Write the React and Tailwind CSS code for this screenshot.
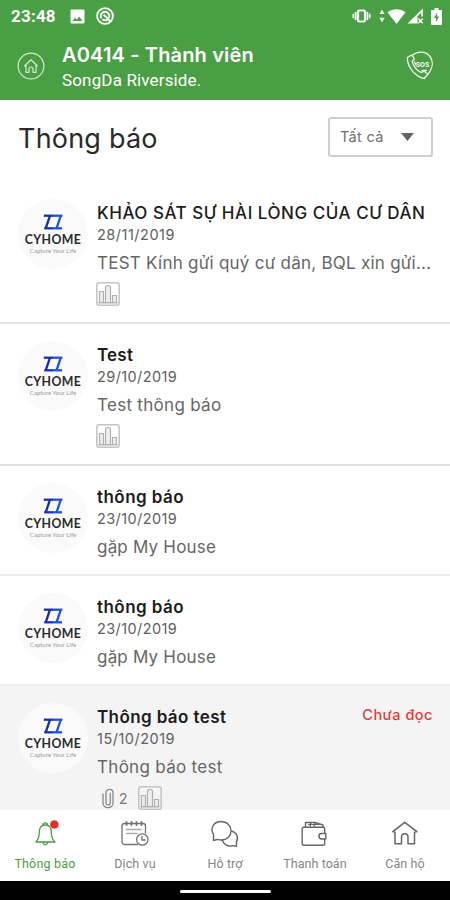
import React from "react";

const notices = [
  { id: 1, title: "KHẢO SÁT SỰ HÀI LÒNG CỦA CƯ DÂN", date: "28/11/2019", body: "TEST Kính gửi quý cư dân, BQL xin gửi...", chart: true, titleClass: "font-medium tracking-[0.53px]", dateClass: "tracking-[0.5px]", bodyClass: "tracking-[0.25px]" },
  { id: 2, title: "Test", date: "29/10/2019", body: "Test thông báo", chart: true, titleClass: "font-semibold tracking-[0.2px]", dateClass: "tracking-[0.4px]", bodyClass: "tracking-[0.3px]" },
  { id: 3, title: "thông báo", date: "23/10/2019", body: "gặp My House", titleClass: "font-semibold tracking-[0.45px]", dateClass: "tracking-[0.4px]", bodyClass: "tracking-[0.2px]" },
  { id: 4, title: "thông báo", date: "23/10/2019", body: "gặp My House", titleClass: "font-semibold tracking-[0.45px]", dateClass: "tracking-[0.4px]", bodyClass: "tracking-[0.2px]" },
  { id: 5, title: "Thông báo test", date: "15/10/2019", body: "Thông báo test", chart: true, files: 2, unread: true, titleClass: "font-semibold tracking-[0.4px]", dateClass: "tracking-[0.5px]", bodyClass: "tracking-[0.3px]" },
];

function StatusBar() {
  return (
    <div className="flex h-8 items-center pl-[11px] pr-[8px] text-white">
      <span className="w-[59px] font-['Roboto',sans-serif] text-[17px] font-bold leading-8 tracking-[0.2px]">23:48</span>
      <svg className="h-[15px] w-[15px]" viewBox="0 0 15 15">
        <rect x="0.5" y="0.5" width="14" height="14" rx="1.2" fill="#fff" />
        <path d="M2.5 12 5 8.8l1.8 2 2.4-3.2 3.3 4.4z" fill="#4a9e43" />
      </svg>
      <svg className="ml-[11px] h-[18px] w-[18px]" viewBox="0 0 18 18" fill="none" stroke="#fff">
        <circle cx="9" cy="9" r="7.9" strokeWidth="1.9" />
        <path d="M5.3 11.2A4.3 4.3 0 1 1 12.8 11M6.2 12.4q2.8 1.8 5.4.3" strokeWidth="1.9" />
        <path d="M7.6 7.6 14 14" strokeWidth="1.8" />
      </svg>
      <svg className="ml-auto h-[14px] w-[19px]" viewBox="0 0 19 14" fill="none" stroke="#fff">
        <path d="M1.2 4.8v4.4M17.8 4.8v4.4" strokeWidth="1.4" />
        <path d="M3.6 3v8M15.4 3v8" strokeWidth="1.8" />
        <rect x="6" y="1.5" width="7" height="11" rx="1" strokeWidth="2.2" />
      </svg>
      <svg className="ml-[8px] h-[15px] w-[27px]" viewBox="0 0 27 15" fill="#fff">
        <path d="M3 .8 5.6 5H.4zM3 13.2.4 8.8h5.2z" />
        <path d="M8.5 3.3C13.5-.8 21.5-.8 26.5 3.3L17.5 15z" />
      </svg>
      <svg className="ml-[1px] h-[16px] w-[17px]" viewBox="0 0 17 16" fill="#fff">
        <path d="M.5 15.5 15.8.5v8h-1.6V4.6L10.5 8.2v7.3z" />
        <path d="m11.3 10.5 4.4 4.7m0-4.7-4.4 4.7" stroke="#fff" strokeWidth="1.3" />
      </svg>
      <svg className="ml-[7px] h-[17px] w-[11px]" viewBox="0 0 11 17">
        <path d="M3.5 0h4v2H10q1 0 1 1v13q0 1-1 1H1q-1 0-1-1V3q0-1 1-1h2.5z" fill="#fff" />
        <path d="M6.2 4.5 3 10h2v4l3.2-5.5h-2z" fill="#4a9e43" />
      </svg>
    </div>
  );
}

function Header() {
  return (
    <header className="h-[100px] shrink-0 bg-[#4a9e43] text-white">
      <StatusBar />
      <div className="flex h-[68px] pl-[17px] pr-[16px]">
        <svg className="mt-[20px] h-[28px] w-[28px]" viewBox="0 0 28 28" fill="none" stroke="#d6ecd3" strokeWidth="1.2">
          <circle cx="14" cy="14" r="12.9" />
          <path d="m7.3 14.3 6.7-6.5 6.7 6.5M9 13v7.3h3V17q0-2 2-2t2 2v3.3h3V13M9 13v7.3" strokeLinejoin="round" />
        </svg>
        <div className="ml-[17px] flex-1 font-['Inter',sans-serif]">
          <h1 className="mt-[11px] text-[20px] font-semibold leading-6 tracking-[0.15px] whitespace-nowrap">A0414 - Thành viên</h1>
          <p className="mt-[3px] font-['Roboto',sans-serif] text-[17px] leading-5 tracking-[0.15px]">SongDa Riverside.</p>
        </div>
        <svg className="mt-[19px] h-[30px] w-[28px]" viewBox="0 0 28 30" fill="none" stroke="#eff8ed" strokeWidth="1.3" strokeLinejoin="round" strokeLinecap="round">
          <path d="M6 4.5C12-.5 20 .3 24 5.5c3.6 4.8 2.8 11.5-1.8 17.5" />
          <path d="m1.3 6.5 4-2.4c1 0 3 3.2 3 4.1l-2.2 2c.8 4.5 4.8 9.5 8.9 11.2l2.8-1.1c1 .1 3.7 2.6 3.6 3.5L18.2 27.5C9.5 25.7 1.2 16.5 1.3 6.5Z" />
          <path d="M16 19.5h4.5M8.5 11l1.5 3" />
          <text x="9.8" y="15.5" fill="#fff" stroke="none" className="font-['Roboto',sans-serif] text-[7px] font-bold">SOS</text>
        </svg>
      </div>
    </header>
  );
}

function Avatar() {
  return (
    <div className="mt-[17px] flex h-[70px] w-[70px] shrink-0 flex-col items-center rounded-full bg-[#fafafa]">
      <svg className="mt-[15px] h-[16px] w-[20px]" viewBox="0 0 20 16" fill="none" strokeWidth="2.3">
        <path d="M7 1.6 2.8 14.2" stroke="#1b2a9c" />
        <path d="M17.8 1.6 13.6 14.2" stroke="#1d55e0" />
        <path d="M.8 1.7H10" stroke="#1b2fa8" />
        <path d="M9.5 1.7H19.4" stroke="#2350d8" />
        <path d="M1.2 14.3H10" stroke="#1b2fc0" />
        <path d="M9.5 14.3H19" stroke="#1d55e0" />
      </svg>
      <span className="mt-[2px] font-['Lato',sans-serif] text-[12.3px] font-bold leading-[15px] tracking-[0.4px] text-[#2b2b2b]">CYHOME</span>
      <span className="font-['Lato',sans-serif] text-[6px] leading-[8px] tracking-[0.05px] whitespace-nowrap text-[#999]">Capture Your Life</span>
    </div>
  );
}

function ChartIcon() {
  return (
    <svg className="h-6 w-6" viewBox="0 0 24 24" fill="none" stroke="#b0b0b0">
      <rect x="0.8" y="0.8" width="22.4" height="22.4" rx="2.5" stroke="#c4c4c4" strokeWidth="1.5" />
      <path d="M3.5 20.5V9.5H7.5V20.5ZM9.5 20.5V5.5Q9.5 3.5 12 3.5T14.5 5.5V20.5ZM16.5 20.5V13.5H20.5V20.5ZM2.5 20.8H21.5" fill="#eee" strokeWidth="1.2" />
    </svg>
  );
}

function Notice({ item }) {
  return (
    <li className={item.unread ? "flex h-[125px] shrink-0 bg-[#f4f4f4] pl-[18px] overflow-hidden" : item.chart ? "flex h-[142px] shrink-0 border-b-2 border-[#e4e4e4] pl-[18px]" : "flex h-[110px] shrink-0 border-b-2 border-[#ececec] pl-[18px]"}>
      <Avatar />
      <div className="ml-[9px] min-w-0 flex-1 pr-[17px] font-['Inter',sans-serif]">
        <div className="mt-[20px] flex h-[22px] justify-between">
          <h3 className={`text-[17px] leading-[22px] whitespace-nowrap text-[#1c1c1c] ${item.titleClass}`}>{item.title}</h3>
          {item.unread && <span className="text-[14.5px] font-medium leading-[18px] tracking-[0.5px] whitespace-nowrap text-[#e23b3b]">Chưa đọc</span>}
        </div>
        <p className={`mt-[2px] text-[14.5px] leading-[18px] text-[#606060] ${item.dateClass}`}>{item.date}</p>
        <p className={`mt-[8px] text-[17px] leading-[22px] whitespace-nowrap text-[#666] ${item.bodyClass}`}>{item.body}</p>
        <div className="mt-[8px] ml-[-1px] flex">
          {item.files && (
            <div className="flex w-[42px] items-center pl-[6px]">
              <svg className="h-[21px] w-[12px]" viewBox="0 0 12 21" fill="none" stroke="#888" strokeWidth="1.3" strokeLinecap="round">
                <path d="M8.3 5.5v9.2c0 3-4.3 3-4.3 0V5C4 .1 11 .1 11 5v10c0 6.2-10 6.2-10 0V6" />
              </svg>
              <span className="ml-[5px] text-[14px] text-[#777]">{item.files}</span>
            </div>
          )}
          {item.chart && <ChartIcon />}
        </div>
      </div>
    </li>
  );
}

function BottomNav() {
  const label = "mt-[8px] font-['Roboto',sans-serif] text-[12.5px] leading-4 whitespace-nowrap";
  const icon = "mt-[10px] h-[28px] w-[30px]";
  return (
    <nav className="grid h-[71px] shrink-0 grid-cols-5 bg-white text-[#858585]">
      <a className="flex flex-col items-center text-[#4a9e43]">
        <svg className={icon} viewBox="0 0 30 28" fill="none" stroke="currentColor" strokeWidth="1.3" strokeLinejoin="round">
          <path d="M13.2 5.2V4q2.2-2.2 4.2 0v1.2M15.3 5c-4.6 0-6 3.2-6 7 0 5-1 7.6-3.4 10h19c-2.5-2.4-3.6-5-3.6-10 0-4-1.4-7-6-7ZM12.8 22.5q2.5 4.5 5 0" />
          <circle cx="24.3" cy="4.5" r="4.5" fill="#e52b2b" stroke="#fff" strokeWidth="0.6" />
        </svg>
        <span className={`${label} tracking-[0.2px]`}>Thông báo</span>
      </a>
      <a className="flex flex-col items-center">
        <svg className={icon} viewBox="0 0 30 28" fill="none" stroke="#737373" strokeWidth="1.3" strokeLinecap="round">
          <path d="M17.5 24.5H5Q2 24.5 2 21.5V6Q2 3.5 4.5 3.5H23Q25.5 3.5 25.5 6V13" />
          <path d="M6.5 1.8V5M11.5 1.8V5M16.5 1.8V5M21.5 1.8V5" strokeWidth="1.8" />
          <path d="M6.5 9.5H21M6.5 13.5H17" stroke="#aaa" />
          <circle cx="22.3" cy="19.5" r="5.7" />
          <path d="M22 16.5V20h3" />
        </svg>
        <span className={`${label} tracking-[0.1px]`}>Dịch vụ</span>
      </a>
      <a className="flex flex-col items-center">
        <svg className={icon} viewBox="0 0 30 28" fill="none" stroke="#666" strokeWidth="1.4" strokeLinejoin="round">
          <path d="M3.5 20.5V14.2C-.5 7.5 4.5 1.5 11 1.5c6 0 10 4.2 10 9.5s-4 9-9.5 9q-2.5 0-4-.7Z" />
          <path d="M21.3 11c5.3 1.2 7.7 6.6 5.2 10.5v4.7l-3.8-.6c-4.4 1.5-8.7-.6-10.5-5.6" />
        </svg>
        <span className={`${label} tracking-[0.1px]`}>Hỗ trợ</span>
      </a>
      <a className="flex flex-col items-center">
        <svg className={icon} viewBox="0 0 30 28" fill="none" stroke="#666" strokeWidth="1.4" strokeLinejoin="round">
          <path d="M24.7 13.5V9Q24.7 7.3 23 7.3H4Q2.2 7.3 2.2 9V23.5Q2.2 25.3 4 25.3H23Q24.7 25.3 24.7 23.5V19" />
          <path d="M25.8 13.5H21.5Q19 13.5 19 16.2T21.5 19H25.8ZM5.5 7V2.5H15L23 5V7M11 2.5 10 6.5M15 2.5 14 6.5" />
          <path d="M8 4.5H20" strokeWidth="1" />
        </svg>
        <span className={`${label} tracking-[0.05px]`}>Thanh toán</span>
      </a>
      <a className="flex flex-col items-center">
        <svg className={icon} viewBox="0 0 30 28" fill="none" stroke="#666" strokeWidth="1.5" strokeLinejoin="round">
          <path d="M5 12.2 2.8 11.6 14.7 2.3 27 11.6 24.5 12.3V23.7H18V17Q18 13.7 14.8 13.7T11.5 17V23.7H5Z" />
        </svg>
        <span className={`${label} tracking-[0.1px]`}>Căn hộ</span>
      </a>
    </nav>
  );
}

export default function App() {
  return (
    <div className="flex h-[900px] w-[450px] flex-col overflow-hidden bg-white">
      <Header />
      <main className="flex min-h-0 flex-1 flex-col overflow-hidden">
        <div className="flex h-[82px] shrink-0 items-start justify-between pl-[18px] pr-[17px] font-['Inter',sans-serif]">
          <h2 className="mt-[21px] text-[27px] leading-9 tracking-[0.2px] text-[#2b2b2b]">Thông báo</h2>
          <button className="mt-[17px] flex h-[40px] w-[105px] items-center justify-between rounded-[3px] border-2 border-[#cfcfcf] pl-[10px] pr-[17px]">
            <span className="text-[14.5px] tracking-[0.3px] text-[#707070]">Tất cả</span>
            <svg className="h-[8px] w-[13px]" viewBox="0 0 13 8"><path d="M0 0h13L6.5 8z" fill="#666" /></svg>
          </button>
        </div>
        <ul className="flex flex-col">
          {notices.map((item) => <Notice key={item.id} item={item} />)}
        </ul>
      </main>
      <BottomNav />
      <div className="flex h-[19px] shrink-0 justify-center bg-black">
        <div className="mt-[9px] h-[3px] w-[91px] rounded-full bg-white"></div>
      </div>
    </div>
  );
}
